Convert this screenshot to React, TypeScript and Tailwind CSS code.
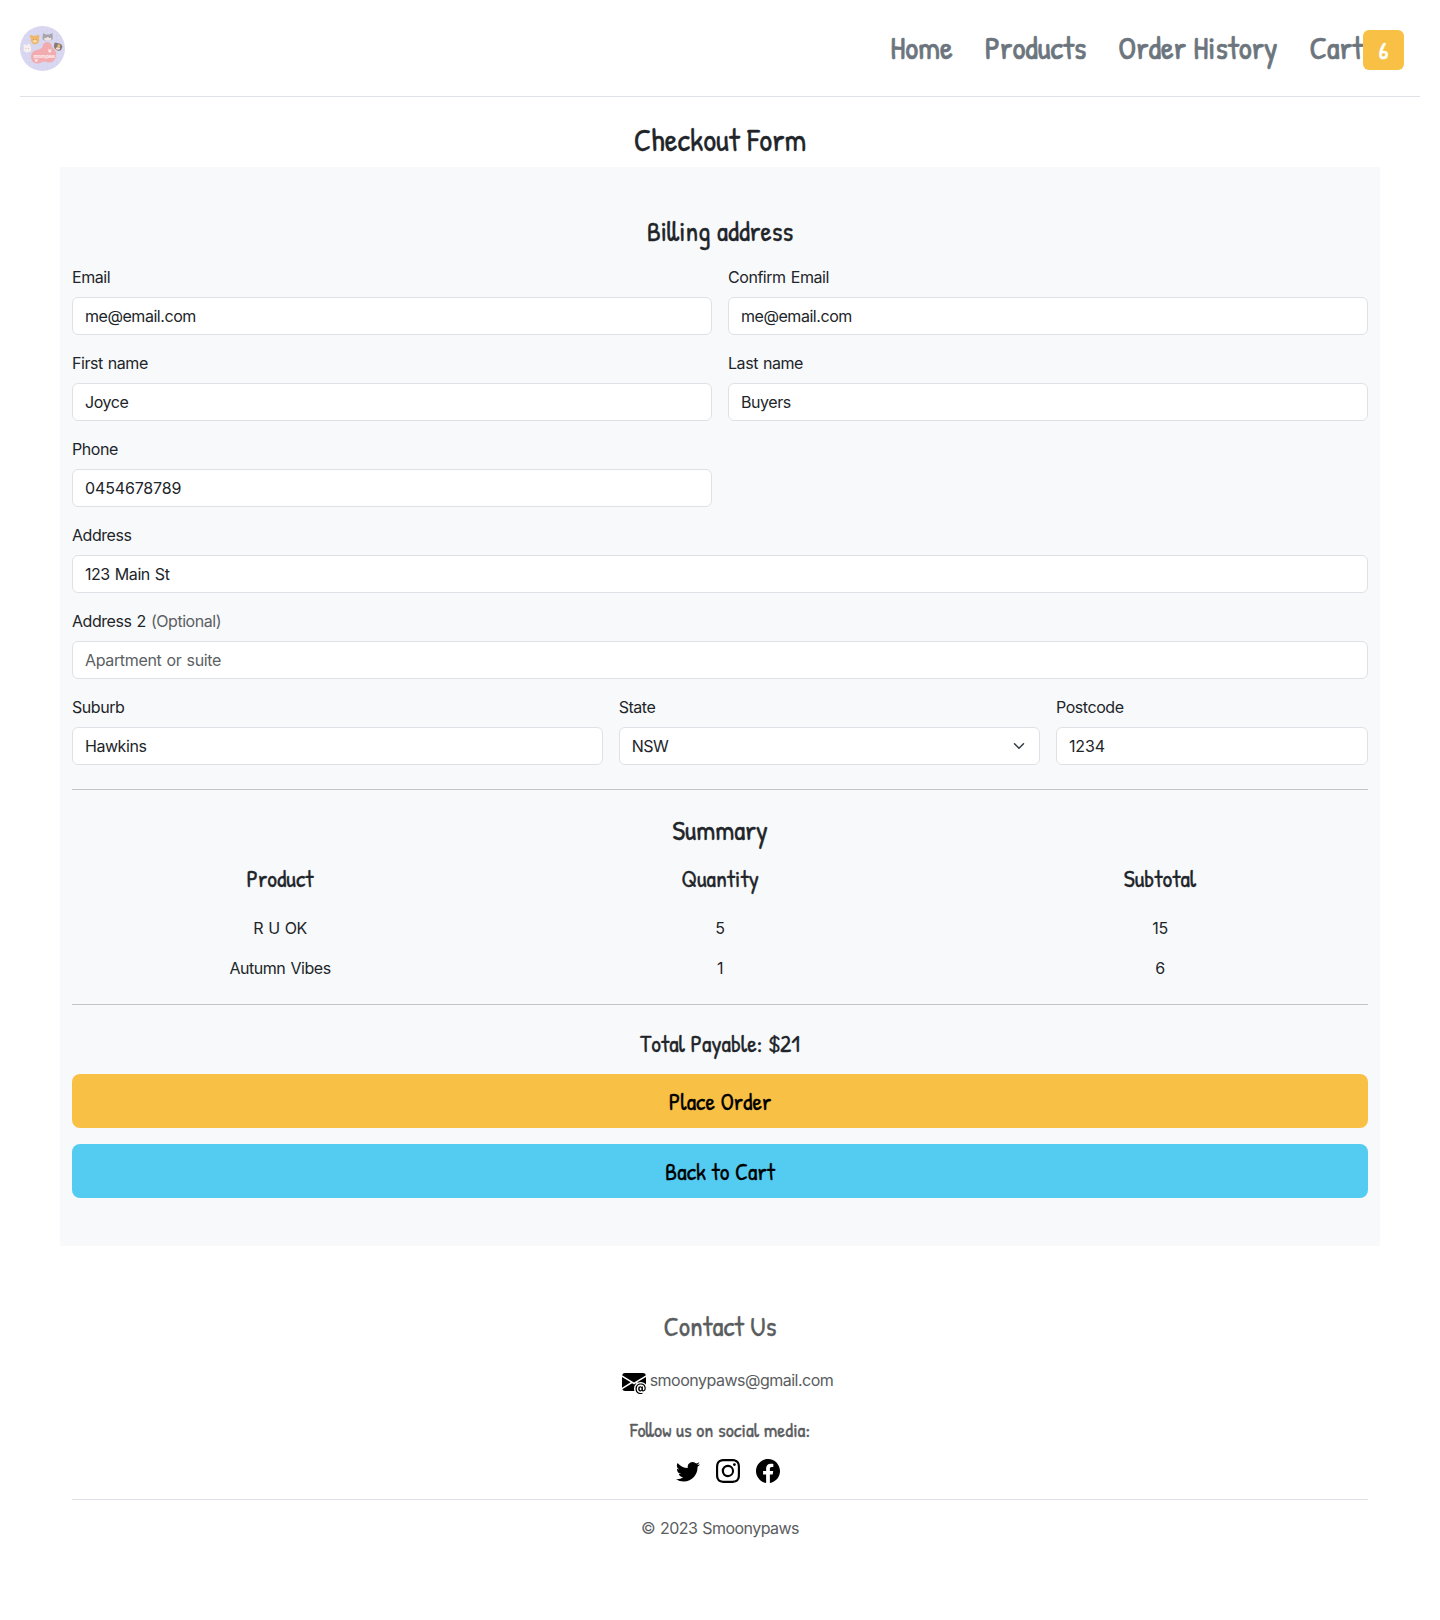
import type { ReactNode } from "react";
import { BsEnvelopeAtFill, BsFacebook, BsInstagram, BsTwitter } from "react-icons/bs";

const hand = "font-['Patrick_Hand','Lato',sans-serif] tracking-normal [word-spacing:0] whitespace-nowrap";

function Heading({ text, className }: { text: string; className: string }) {
  return (
    <div className={`flex items-center justify-center leading-none [-webkit-text-stroke-width:0.3px] ${hand} ${className}`}>
      {text}
    </div>
  );
}

function Field({ label, value, span, hint, placeholder, select, digits }: {
  label: string; value?: string; span: string; hint?: string; placeholder?: string; select?: boolean; digits?: boolean;
}) {
  return (
    <div className={span}>
      <label className="mb-2 block h-6">
        {label}
        {hint && <span className="text-[#5c5f63]"> {hint}</span>}
      </label>
      <div className="flex h-[38px] items-center justify-between rounded-md border border-[#dee2e6] bg-white px-3">
        {placeholder ? (
          <span className="tracking-[-0.35px] text-[#5c5f63]">{placeholder}</span>
        ) : (
          <span className={digits ? "tracking-[-0.15px]" : ""}>{value}</span>
        )}
        {select && (
          <svg viewBox="0 0 16 16" className="h-3 w-4" fill="none" stroke="#343a40" strokeWidth="2" strokeLinecap="round" strokeLinejoin="round">
            <path d="m2 5 6 6 6-6" />
          </svg>
        )}
      </div>
    </div>
  );
}

function Logo() {
  return (
    <svg viewBox="0 0 45 45" className="size-[45px]">
      <defs>
        <clipPath id="disc"><circle cx="22.5" cy="22.5" r="22.5" /></clipPath>
        <pattern id="check" width="4.5" height="4.5" patternUnits="userSpaceOnUse">
          <rect width="4.5" height="4.5" fill="#d9d8f1" />
          <path d="M0 0H4.5M0 0V4.5" stroke="#cecdec" strokeWidth=".6" />
        </pattern>
      </defs>
      <g clipPath="url(#disc)">
        <rect width="45" height="45" fill="url(#check)" />
        <path d="M22.500 20.500c.6-2.800 2.300-4.500 4.700-4.500 2.800 0 4.700 2 5 5.200 2.600 1.600 4 4.300 3.800 7.800-.2 4.800-3 7.500-6.500 7.500-2.200 0-3.600-1-5.500-1-2 0-3.300 2-6.200 2-4 0-6.800-2.800-6.800-6.800 0-4.200 3.500-6.500 7-7 1.700-.4 3.700-1.200 4.500-3.200Z" fill="#f2acb0" />
        <g fill="#f6f1ee"><circle cx="7.400" cy="22.800" r="3.800" /><circle cx="4.800" cy="19.600" r="1.400" /><circle cx="8.800" cy="19.200" r="1.400" /></g>
        <g fill="#f0b768"><circle cx="15" cy="14" r="4.200" /><circle cx="11.600" cy="10.600" r="1.600" /><circle cx="17.800" cy="10.400" r="1.600" /></g>
        <ellipse cx="14.900" cy="15.200" rx="1.900" ry="1.300" fill="#f9dfb6" />
        <path d="m22.400 12.500.7-5.500 2.300 1.500h4l3-1.500.5 5.500c-1 3-9.500 3.200-10.500 0Z" fill="#a5a4ad" />
        <ellipse cx="27.800" cy="12.900" rx="3.600" ry="1.800" fill="#eee4e3" />
        <path d="m33.800 20.500.8-4 2.800.6 3.500 1 1.600 2.400-1.400 3.500c-2 1.800-6.500 0-7.300-3.500Z" fill="#857a76" />
        <circle cx="38.800" cy="19.700" r="1.500" fill="#efb874" />
        <ellipse cx="38" cy="22.500" rx="2.200" ry="1.300" fill="#f3e0d3" />
        <g fill="#8f7770"><circle cx="6" cy="22.600" r=".4" /><circle cx="8.500" cy="22.300" r=".4" /><circle cx="13.500" cy="13.500" r=".4" /><circle cx="16.500" cy="13.200" r=".4" /><circle cx="26" cy="11.600" r=".5" /><circle cx="29.400" cy="11.600" r=".5" /></g>
        <g fill="#fbe9e7"><circle cx="29.800" cy="25.200" r="1.400" /><circle cx="28.400" cy="23.500" r=".6" /><circle cx="31" cy="23.300" r=".6" /><circle cx="16.300" cy="34.600" r="1.300" /><circle cx="14.900" cy="33" r=".6" /><circle cx="17.700" cy="33" r=".6" /></g>
        <text x="24" y="31.500" textAnchor="middle" textLength="21" lengthAdjust="spacingAndGlyphs" fontFamily="Lato, sans-serif" fontSize="5" fontWeight="700" fill="#fdf3f1">smoonypaws</text>
      </g>
    </svg>
  );
}

function Row({ cells }: { cells: ReactNode[] }) {
  return (
    <div className="-mx-3 grid h-10 grid-cols-3 items-center text-center">
      {cells.map((c, i) => <div key={i}>{c}</div>)}
    </div>
  );
}

export default function App() {
  return (
    <div className="min-h-[1620px] bg-white font-['Inter',sans-serif] text-base leading-6 tracking-[-0.45px] text-[#212529] [word-spacing:1px]">
      <header className="mx-5 flex h-[97px] items-center justify-between border-b border-[#dee2e6]">
        <Logo />
        <nav className={`mr-4 flex items-center text-[32px] leading-none text-[#6c757d] [-webkit-text-stroke-width:0.7px] ${hand}`}>
          <span>Home</span>
          <span className="ml-8">Products</span>
          <span className="ml-8">Order History</span>
          <span className="ml-8">Cart</span>
          <span className="mt-1 flex h-10 w-[41px] items-center justify-center rounded-md bg-[#f8c145] text-[24px] text-white">
            6
          </span>
        </nav>
      </header>

      <Heading text="Checkout Form" className="mt-6 mb-2 h-[38px] text-[32px]" />

      <main className="mx-[60px] bg-[#f8f9fb] px-3 py-12">
        <Heading text="Billing address" className="mb-4 h-[34px] pb-0.5 text-[28px]" />

        <form className="grid grid-cols-12 gap-4">
          <Field span="col-span-6" label="Email" value="me@email.com" />
          <Field span="col-span-6" label="Confirm Email" value="me@email.com" />
          <Field span="col-span-6" label="First name" value="Joyce" />
          <Field span="col-span-6" label="Last name" value="Buyers" />
          <Field span="col-span-6" label="Phone" value="0454678789" digits />
          <Field span="col-span-12" label="Address" value="123 Main St" />
          <Field span="col-span-12" label="Address 2" hint="(Optional)" placeholder="Apartment or suite" />
          <Field span="col-span-5" label="Suburb" value="Hawkins" />
          <Field span="col-span-4" label="State" value="NSW" select />
          <Field span="col-span-3" label="Postcode" value="1234" digits />
        </form>

        <hr className="my-6 border-[#c2c4c7]" />

        <Heading text="Summary" className="mb-4 h-[34px] pb-0.5 text-[28px]" />
        <div className="-mx-3 mb-[15px] grid grid-cols-3">
          <Heading text="Product" className="h-[29px] pb-0.5 text-[24px]" />
          <Heading text="Quantity" className="h-[29px] pb-0.5 text-[24px]" />
          <Heading text="Subtotal" className="h-[29px] pb-0.5 text-[24px]" />
        </div>
        <Row cells={["R U OK", "5", "15"]} />
        <Row cells={["Autumn Vibes", "1", "6"]} />

        <hr className="mt-4 mb-6 border-[#c2c4c7]" />

        <Heading text="Total Payable: $21" className="mb-4 h-[29px] pb-0.5 text-[24px]" />
        <button className="mb-4 block w-full rounded-lg bg-[#f8c145] text-black">
          <Heading text="Place Order" className="h-[54px] text-[24px]" />
        </button>
        <button className="block w-full rounded-lg bg-[#54ccf1] text-black">
          <Heading text="Back to Cart" className="h-[54px] text-[24px]" />
        </button>
      </main>

      <footer className="mx-[72px] pt-16 text-[#5a5d60]">
        <Heading text="Contact Us" className="mb-6 h-[34px] pb-0.5 text-[28px]" />
        <div className="flex h-6 justify-center gap-1 pl-[15px] tracking-[-0.5px]">
          <BsEnvelopeAtFill className="mt-0.5 size-6 text-black" />
          <span>smoonypaws@gmail.com</span>
        </div>
        <Heading text="Follow us on social media:" className="mt-[26px] h-6 text-[20px]" />
        <div className="mt-[17px] flex justify-center gap-4 pb-4 pl-4 text-black">
          <BsTwitter className="size-6" />
          <BsInstagram className="size-6" />
          <BsFacebook className="size-6" />
        </div>
        <div className="border-t border-[#dee2e6] pt-4 text-center tracking-[-0.55px]">© 2023 Smoonypaws</div>
      </footer>
    </div>
  );
}
